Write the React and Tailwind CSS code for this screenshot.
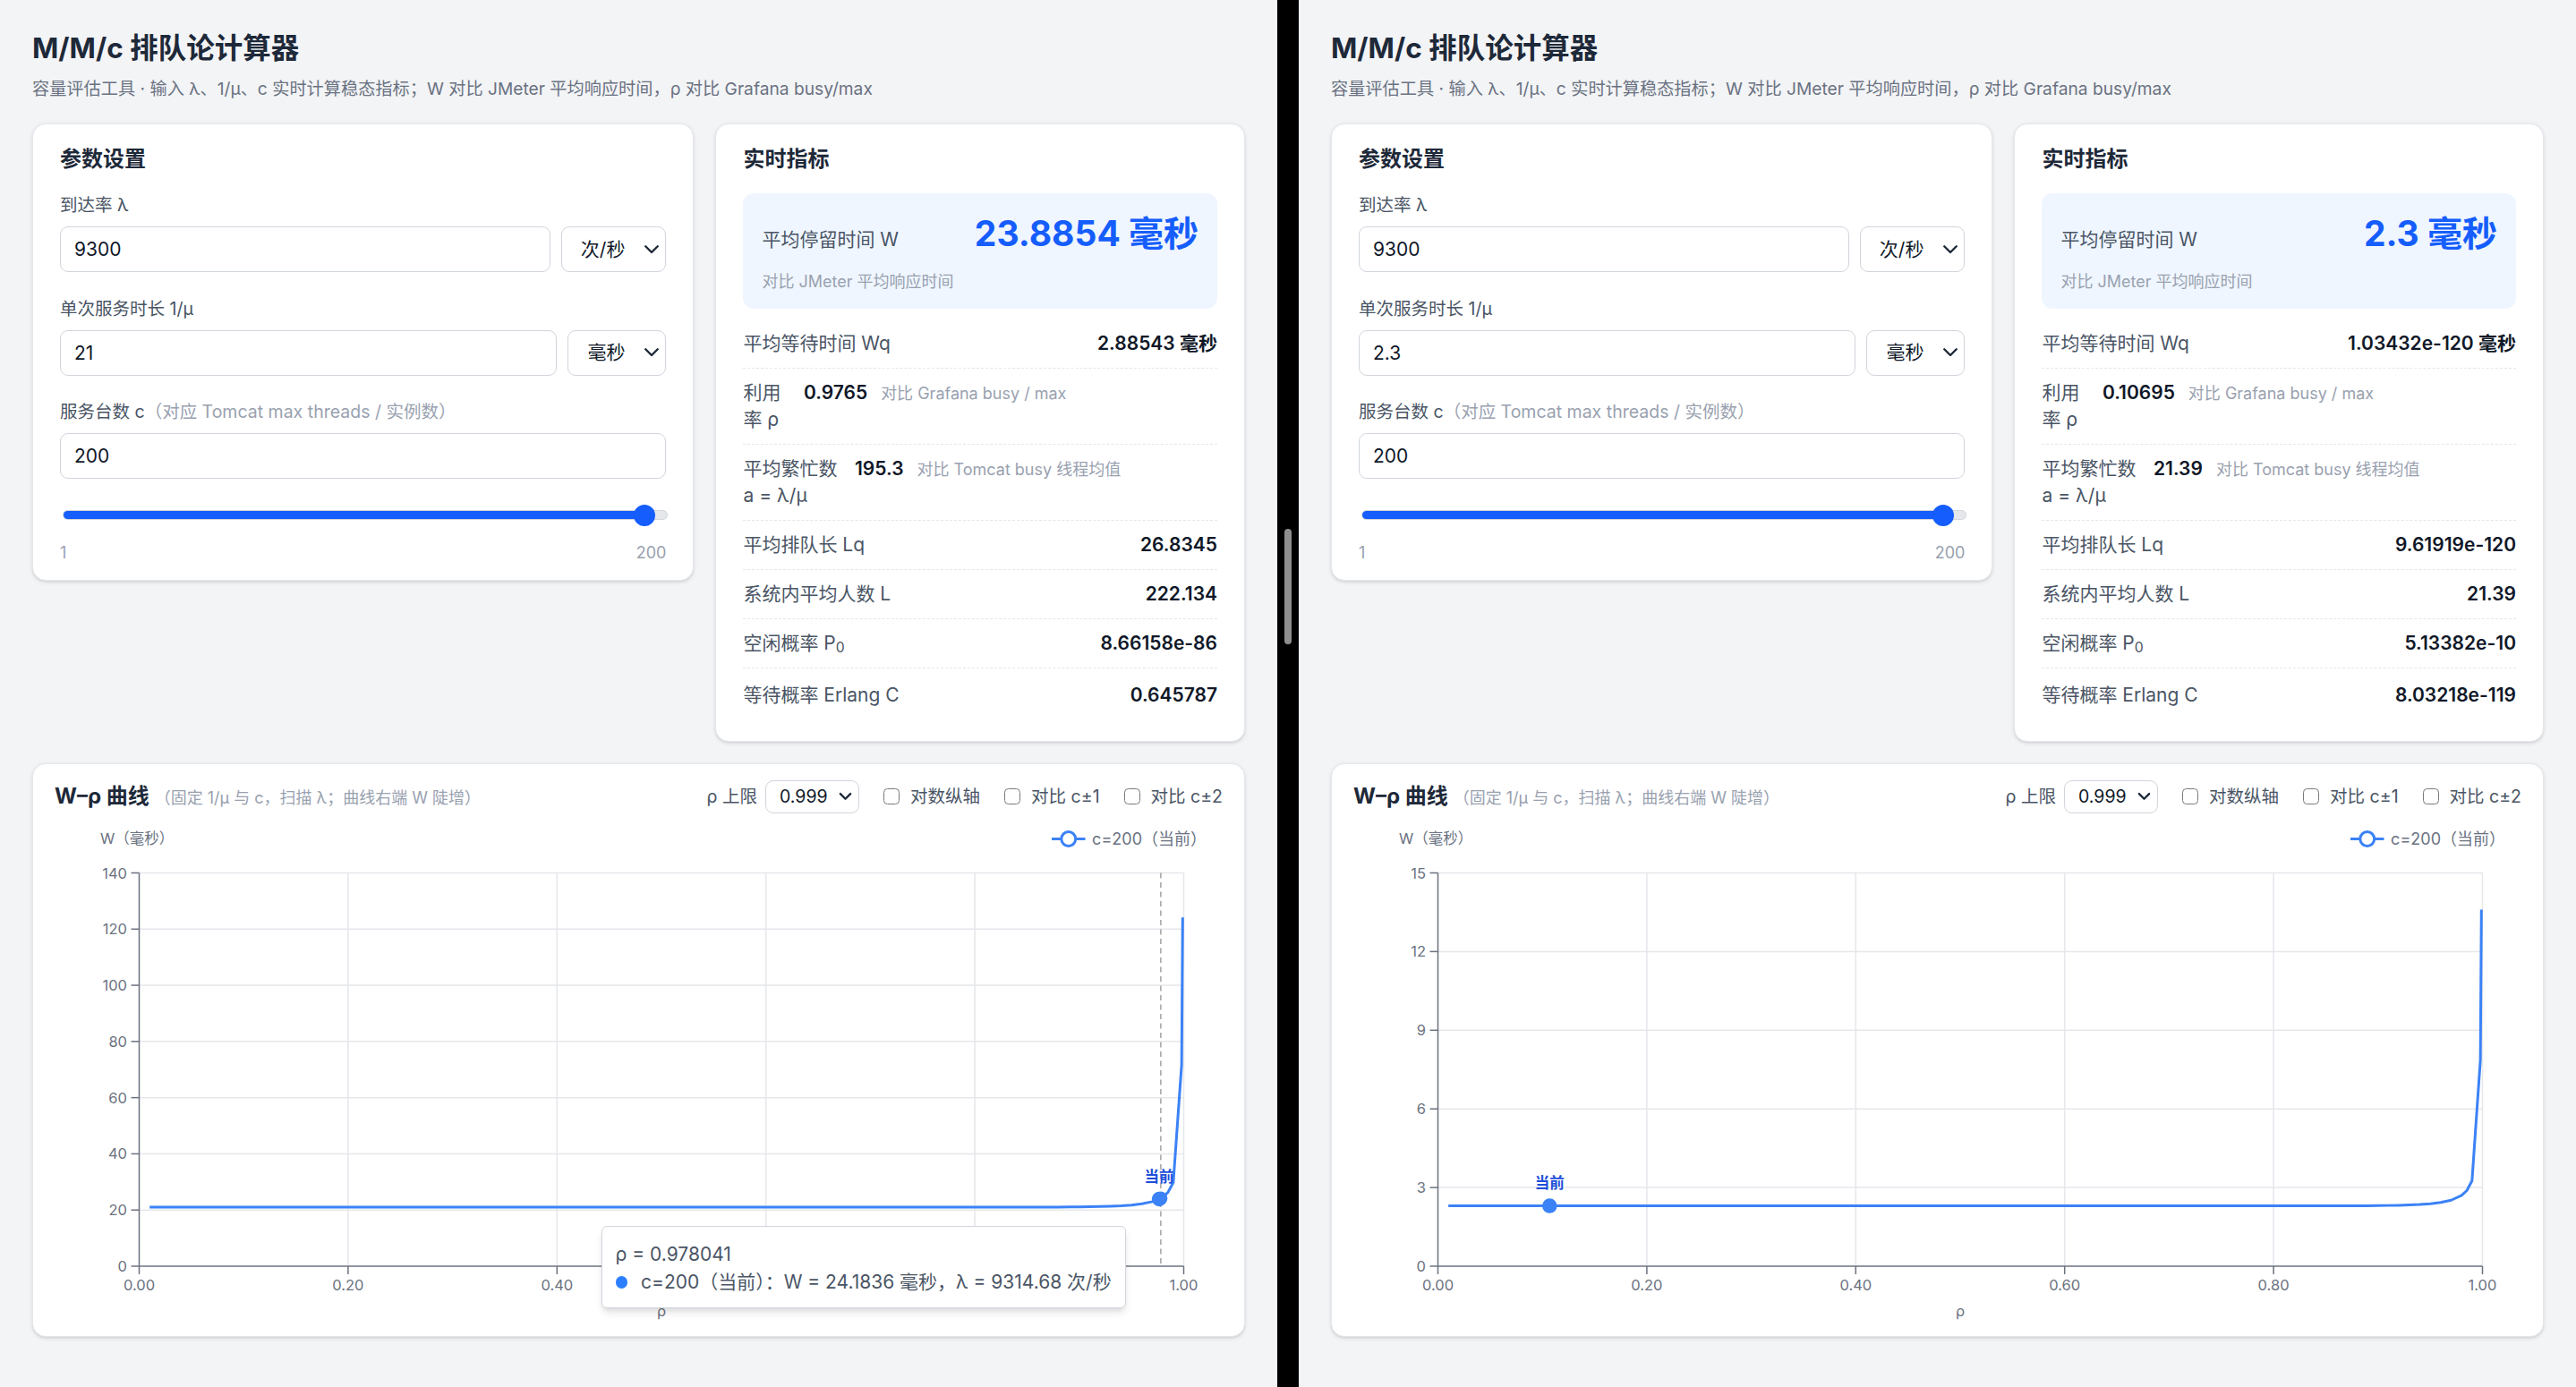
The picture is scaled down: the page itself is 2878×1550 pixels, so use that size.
import React from 'react';

// M/M/c helpers, used for the W–ρ curve
function erlangC(c, a) {
  let b = 1;
  for (let k = 1; k <= c; k++) b = (a * b) / (k + a * b);
  const rho = a / c;
  return b / (1 - rho * (1 - b));
}

const waitTime = (rho, c, s) => s + (erlangC(c, rho * c) * s) / (c * (1 - rho));

const RHOS = [];
for (let i = 1; i <= 98; i++) RHOS.push(i / 100);
RHOS.push(0.985, 0.99, 0.998, 0.999);

const PANES = [
  {
    service: '21',
    W: '23.8854 毫秒',
    Wq: '2.88543 毫秒',
    rho: '0.9765',
    a: '195.3',
    Lq: '26.8345',
    L: '222.134',
    P0: '8.66158e-86',
    C: '0.645787',
    s: 21,
    rhoNow: 0.9765,
    yMax: 140,
    yStep: 20,
    // tick labels at 0.60 / 0.80 sit under the tooltip
    hover: { rho: 0.978041, w: 24.1836, covered: [0.6, 0.8], label: 'ρ = 0.978041', text: 'c=200（当前）：W = 24.1836 毫秒，λ = 9314.68 次/秒' },
  },
  {
    service: '2.3',
    W: '2.3 毫秒',
    Wq: '1.03432e-120 毫秒',
    rho: '0.10695',
    a: '21.39',
    Lq: '9.61919e-120',
    L: '21.39',
    P0: '5.13382e-10',
    C: '8.03218e-119',
    s: 2.3,
    rhoNow: 0.10695,
    yMax: 15,
    yStep: 3,
    hover: null,
  },
];

const card = 'rounded-[10px] border border-gray-200 bg-white shadow-sm';

const Chevron = ({ className = '', width = 1.6 }) => (
  <svg viewBox="0 0 12 8" className={className} fill="none" stroke="currentColor" strokeWidth={width} strokeLinecap="round" strokeLinejoin="round">
    <path d="M1.5 1.5 6 6l4.5-4.5" />
  </svg>
);

function Field({ label, hint, value, unit }) {
  return (
    <div>
      <div className="mb-1.5 text-[13px] leading-5 text-gray-600">
        {label}
        {hint && <span className="text-gray-400">{hint}</span>}
      </div>
      <div className="flex gap-2">
        <input
          readOnly
          value={value}
          className="h-[34px] min-w-0 flex-1 rounded-md border border-gray-300 bg-white px-2.5 text-sm text-gray-900 outline-none"
        />
        {unit && (
          <div className="flex h-[34px] items-center rounded-md border border-gray-300 bg-white pl-3.5 pr-1 text-sm text-gray-900">
            {unit}
            <Chevron className="ml-3.5 h-2 w-3 text-gray-800" />
          </div>
        )}
      </div>
    </div>
  );
}

function ParamsCard({ p }) {
  return (
    <div className={`${card} px-5 pt-4 pb-3`}>
      <h2 className="mb-3.5 text-base font-bold leading-5 text-gray-800">参数设置</h2>
      <div className="flex flex-col gap-[17px]">
        <Field label="到达率 λ" value="9300" unit="次/秒" />
        <Field label="单次服务时长 1/μ" value={p.service} unit="毫秒" />
        <Field label="服务台数 c" hint="（对应 Tomcat max threads / 实例数）" value="200" />
      </div>
      <div className="relative -mr-px ml-0.5 mt-[19px] flex h-4 items-center">
        <div className="h-[7px] w-full overflow-hidden rounded-full border border-gray-300 bg-gray-200">
          <div className="h-full w-[96.2%] bg-blue-600" />
        </div>
        <div className="absolute left-[96.2%] top-0 h-4 w-4 -translate-x-1/2 rounded-full bg-blue-600" />
      </div>
      <div className="mt-3 flex justify-between text-xs leading-4 text-gray-400">
        <span>1</span>
        <span>200</span>
      </div>
    </div>
  );
}

const row = 'flex items-baseline border-b border-dashed border-gray-200 py-2 text-sm leading-5';

function MetricsCard({ p }) {
  return (
    <div className={`${card} px-5 pt-4 pb-4`}>
      <h2 className="mb-[15px] text-base font-bold leading-5 text-gray-800">实时指标</h2>
      <div className="rounded-lg bg-blue-50 px-3.5 pt-3.5 pb-3">
        <div className="flex items-baseline justify-between">
          <span className="text-sm text-gray-600">平均停留时间 W</span>
          <span className="text-[26px] font-bold leading-8 text-blue-600">{p.W}</span>
        </div>
        <div className="mt-3 text-xs leading-4 text-gray-400">对比 JMeter 平均响应时间</div>
      </div>
      <div className="mt-2">
        <div className={`${row} justify-between`}>
          <span className="text-gray-600">平均等待时间 Wq</span>
          <span className="font-semibold text-gray-900">{p.Wq}</span>
        </div>
        <div className={row}>
          <span className="w-[33px] shrink-0 text-gray-600">
            利用
            <br />率 ρ
          </span>
          <span className="ml-3 font-semibold text-gray-900">{p.rho}</span>
          <span className="ml-2.5 text-xs text-gray-400">对比 Grafana busy / max</span>
        </div>
        <div className={row}>
          <span className="w-[71px] shrink-0 text-gray-600">
            平均繁忙数
            <br />a = λ/μ
          </span>
          <span className="ml-3 font-semibold text-gray-900">{p.a}</span>
          <span className="ml-2.5 text-xs text-gray-400">对比 Tomcat busy 线程均值</span>
        </div>
        <div className={`${row} justify-between`}>
          <span className="text-gray-600">平均排队长 Lq</span>
          <span className="font-semibold text-gray-900">{p.Lq}</span>
        </div>
        <div className={`${row} justify-between`}>
          <span className="text-gray-600">系统内平均人数 L</span>
          <span className="font-semibold text-gray-900">{p.L}</span>
        </div>
        <div className={`${row} justify-between`}>
          <span className="text-gray-600">
            空闲概率 P<sub>0</sub>
          </span>
          <span className="font-semibold text-gray-900">{p.P0}</span>
        </div>
        <div className="flex items-baseline justify-between pt-2.5 pb-2 text-sm leading-5">
          <span className="text-gray-600">等待概率 Erlang C</span>
          <span className="font-semibold text-gray-900">{p.C}</span>
        </div>
      </div>
    </div>
  );
}

function Check({ label }) {
  return (
    <label className="flex items-center gap-2">
      <span className="h-3 w-3 rounded-[3px] border border-[#7a7a7a] bg-white" />
      {label}
    </label>
  );
}

function Chart({ p }) {
  const x0 = 63;
  const x1 = 841;
  const yT = 15;
  const y0 = 308;
  const sx = (r) => x0 + r * (x1 - x0);
  const sy = (w) => y0 - (w / p.yMax) * (y0 - yT);
  const ticksY = [];
  for (let v = 0; v <= p.yMax; v += p.yStep) ticksY.push(v);
  const ticksX = [0, 0.2, 0.4, 0.6, 0.8, 1];
  const covered = p.hover ? p.hover.covered : [];
  const d = RHOS.map((r, i) => `${i ? 'L' : 'M'}${sx(r).toFixed(2)} ${sy(waitTime(r, 200, p.s)).toFixed(2)}`).join(' ');
  const wNow = waitTime(p.rhoNow, 200, p.s);
  const axis = '#6b7280';

  return (
    <svg width={869} height={350} viewBox="0 0 869 350" className="block">
      {ticksY.slice(1).map((v) => (
        <line key={`h${v}`} x1={x0} x2={x1} y1={sy(v)} y2={sy(v)} stroke="#e5e7eb" />
      ))}
      {ticksX.slice(1).map((v) => (
        <line key={`v${v}`} x1={sx(v)} x2={sx(v)} y1={yT} y2={y0} stroke="#e5e7eb" />
      ))}
      {p.hover && <line x1={sx(p.hover.rho)} x2={sx(p.hover.rho)} y1={yT} y2={y0} stroke="#a3a3a3" strokeDasharray="4 3" />}
      <line x1={x0} x2={x0} y1={yT} y2={y0} stroke={axis} />
      <line x1={x0} x2={x1} y1={y0} y2={y0} stroke={axis} />
      {ticksY.map((v) => (
        <g key={`ty${v}`}>
          <line x1={x0 - 6} x2={x0} y1={sy(v)} y2={sy(v)} stroke={axis} />
          <text x={x0 - 9} y={sy(v)} textAnchor="end" dominantBaseline="central" fontSize="11" fill={axis}>
            {v}
          </text>
        </g>
      ))}
      {ticksX.map((v) => (
        <g key={`tx${v}`}>
          <line x1={sx(v)} x2={sx(v)} y1={y0} y2={y0 + 6} stroke={axis} />
          {!covered.includes(v) && (
            <text x={sx(v)} y={y0 + 14} textAnchor="middle" dominantBaseline="central" fontSize="11" fill={axis}>
              {v.toFixed(2)}
            </text>
          )}
        </g>
      ))}
      <path d={d} fill="none" stroke="#3b82f6" strokeWidth="2" strokeLinejoin="round" />
      <circle cx={sx(p.rhoNow)} cy={sy(wNow)} r="5.5" fill="#3b82f6" />
      <text x={sx(p.rhoNow)} y={sy(wNow) - 17} textAnchor="middle" dominantBaseline="central" fontSize="11" fontWeight="700" fill="#1d4ed8">
        当前
      </text>
      {p.hover && <circle cx={sx(p.hover.rho)} cy={sy(p.hover.w)} r="5" fill="#3b82f6" />}
      <text x={(x0 + x1) / 2} y={y0 + 33} textAnchor="middle" dominantBaseline="central" fontSize="11" fill={axis}>
        ρ
      </text>
    </svg>
  );
}

function ChartCard({ p }) {
  return (
    <div className={`${card} mt-4 px-4 pt-3 pb-2.5`}>
      <div className="flex items-center justify-between">
        <div className="flex items-baseline gap-1">
          <h3 className="text-base font-bold text-gray-800">W–ρ 曲线</h3>
          <span className="text-xs text-gray-400">（固定 1/μ 与 c，扫描 λ；曲线右端 W 陡增）</span>
        </div>
        <div className="flex items-center gap-[18px] text-[13px] text-gray-600">
          <label className="flex items-center gap-1.5">
            ρ 上限
            <span className="flex h-[25px] items-center rounded-md border border-gray-300 bg-white pl-2.5 pr-[5px] text-gray-900">
              0.999
              <Chevron className="ml-2 h-[7px] w-[10px] text-gray-800" width={1.9} />
            </span>
          </label>
          <Check label="对数纵轴" />
          <Check label="对比 c±1" />
          <Check label="对比 c±2" />
        </div>
      </div>
      <div className="relative mt-[9px]">
        <div className="flex h-5 items-center justify-between pl-[34px] pr-3 text-gray-500">
          <span className="text-[11px]">W（毫秒）</span>
          <span className="flex items-center gap-[5px] text-xs">
            <svg width="25" height="14" viewBox="0 0 25 14">
              <line x1="0" x2="25" y1="7" y2="7" stroke="#3b82f6" strokeWidth="2" />
              <circle cx="12.5" cy="7" r="5.3" fill="#fff" stroke="#3b82f6" strokeWidth="2" />
            </svg>
            c=200（当前）
          </span>
        </div>
        <Chart p={p} />
        {p.hover && (
          <div className="absolute left-[407px] top-[298px] whitespace-nowrap rounded border border-gray-300 bg-white px-2.5 pt-3 pb-2.5 text-sm leading-[17px] text-gray-600 shadow-md">
            <div>{p.hover.label}</div>
            <div className="mt-1 flex items-center">
              <span className="mr-2.5 h-[9px] w-[9px] rounded-full bg-blue-500" />
              {p.hover.text}
            </div>
          </div>
        )}
      </div>
    </div>
  );
}

function Pane({ p }) {
  return (
    <div className="min-w-0 flex-1 px-6 pt-[22px]">
      <h1 className="text-[21px] font-bold leading-7 text-gray-800">M/M/c 排队论计算器</h1>
      <p className="mt-2 text-[12.8px] leading-4 text-gray-500">
        容量评估工具 · 输入 λ、1/μ、c 实时计算稳态指标；W 对比 JMeter 平均响应时间，ρ 对比 Grafana busy/max
      </p>
      <div className="mt-[18px] grid grid-cols-[5fr_4fr] items-start gap-4">
        <ParamsCard p={p} />
        <MetricsCard p={p} />
      </div>
      <ChartCard p={p} />
    </div>
  );
}

export default function App() {
  return (
    <div className="flex h-[1033.33px] w-[1918.67px] overflow-hidden bg-gray-100 [font-family:Inter,'Noto_Sans_CJK_SC',sans-serif] [zoom:1.5]">
      <Pane p={PANES[0]} />
      <div className="w-4 shrink-0 bg-black pl-[5px] pt-[394px]">
        <div className="h-[86px] w-[5.5px] rounded-full bg-[#8f8f8f]" />
      </div>
      <Pane p={PANES[1]} />
    </div>
  );
}
